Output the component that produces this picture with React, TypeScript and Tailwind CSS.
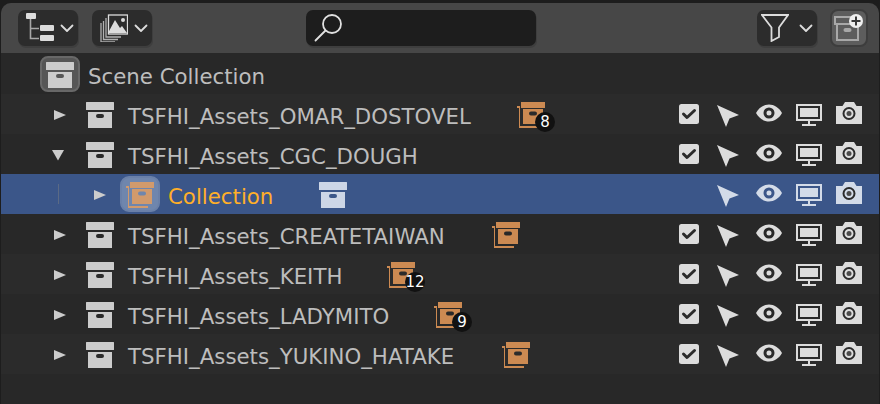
import React from "react";

const font = "font-['DejaVu_Sans','Liberation_Sans',sans-serif]";

const BoxIcon = ({ color = "#cccccc" }: { color?: string }) => (
  <svg width="28" height="26" viewBox="0 0 28 26" className="mt-[2px] shrink-0">
    <path d="M0.5 0H27.5A.5 .5 0 0 1 28 .5V7.5A.5 .5 0 0 1 27.5 8H.5A.5 .5 0 0 1 0 7.5V.5A.5 .5 0 0 1 .5 0Z" fill={color} />
    <path fillRule="evenodd" d="M2 10H26V26H2ZM12 12A2 2 0 0 0 12 16H16A2 2 0 0 0 16 12Z" fill={color} />
  </svg>
);

const OrangeBox = ({ color = "#cc8a52" }: { color?: string }) => (
  <svg width="28" height="26" viewBox="0 0 28 26" className="mt-[2px] shrink-0">
    <rect x="4" y="0" width="24" height="6" fill={color} />
    <path fillRule="evenodd" d="M6 7H26V22H6ZM14 9.5A1.8 1.8 0 0 0 14 13.5H18A1.8 1.8 0 0 0 18 9.5Z" fill={color} />
    <path d="M0 4H3V24H22V26H2V6H0Z" fill={color} />
  </svg>
);

const Triangle = ({ down = false }: { down?: boolean }) => (
  <svg width="12" height="12" viewBox="0 0 12 12" className={down ? "mt-[2px] mr-[2px] shrink-0 -ml-0.5" : "mt-[2px] shrink-0"}>
    {down ? <path d="M0 1H12L6 11.5Z" fill="#cccccc" /> : <path d="M0 1L12 6L0 11Z" fill="#cccccc" />}
  </svg>
);

const Chevron = () => (
  <svg width="14" height="9" viewBox="0 0 14 9" className="shrink-0">
    <path d="M1.5 1.5L7 7L12.5 1.5" fill="none" stroke="#dcdcdc" strokeWidth="1.8" strokeLinecap="round" strokeLinejoin="round" />
  </svg>
);

const Checkbox = () => (
  <svg width="20" height="20" viewBox="0 0 20 20">
    <rect width="20" height="20" rx="2.5" fill="#dcdcdc" />
    <path d="M4.5 10L8 13.5L15.5 6.5" fill="none" stroke="#2b2b2b" strokeWidth="3" strokeLinecap="round" strokeLinejoin="round" />
  </svg>
);

const Cursor = ({ color }: { color: string }) => (
  <svg width="22" height="22" viewBox="0 0 22 22" className="mt-[4px] -ml-[2px]">
    <path d="M0 0L22 10L12.5 13.5L9 22Z" fill={color} />
  </svg>
);

const Eye = ({ color }: { color: string }) => (
  <svg width="26" height="18" viewBox="0 0 26 18">
    <path fillRule="evenodd" d="M0 9C3 3.5 8 0.5 13 0.5S23 3.5 26 9C23 14.5 18 17.5 13 17.5S3 14.5 0 9ZM13 3.5A5.5 5.5 0 1 0 13 14.5A5.5 5.5 0 1 0 13 3.5ZM13 6.5A2.5 2.5 0 1 1 13 11.5A2.5 2.5 0 1 1 13 6.5Z" fill={color} />
  </svg>
);

const Monitor = ({ color }: { color: string }) => (
  <svg width="26" height="22" viewBox="0 0 26 22">
    <path fillRule="evenodd" d="M0 0H26V17H0ZM2 2V15H24V2Z" fill={color} />
    <rect x="4" y="4" width="18" height="9" fill={color} />
    <rect x="12" y="17" width="2" height="3" fill={color} />
    <rect x="6" y="20" width="14" height="2" fill={color} />
  </svg>
);

const Camera = ({ color }: { color: string }) => (
  <svg width="26" height="22" viewBox="0 0 26 22">
    <path d="M0 4H6.5L9 0H18L20.5 4H26V22H0Z" fill={color} />
    <circle cx="13" cy="11.5" r="5.5" fill="none" stroke="#2b2b2b" strokeWidth="2" />
    <circle cx="13" cy="11.5" r="2.5" fill="#4a4a4a" />
  </svg>
);

const Restrict = ({ check = true, color = "#dcdcdc" }: { check?: boolean; color?: string }) => (
  <div className="ml-auto mr-[10px] flex items-center">
    <div className="flex h-10 w-10 items-center justify-center">{check && <Checkbox />}</div>
    <div className="flex h-10 w-10 items-center justify-center"><Cursor color={color} /></div>
    <div className="flex h-10 w-10 items-center justify-center pb-[2px]"><Eye color={color} /></div>
    <div className="flex h-10 w-10 items-center justify-center pt-[2px]"><Monitor color={color} /></div>
    <div className="flex h-10 w-10 items-center justify-center pb-[2px]"><Camera color={color} /></div>
  </div>
);

const rows = [
  { name: "TSFHI_Assets_OMAR_DOSTOVEL", count: "8", bg: "bg-[#2b2b2b]", w: "w-[343px]" },
  { name: "TSFHI_Assets_CGC_DOUGH", open: true, noChild: true, bg: "bg-[#282828]", w: "w-[291px]" },
  { name: "Collection", selected: true, bg: "bg-[#3b5689]", w: "w-[105px]" },
  { name: "TSFHI_Assets_CREATETAIWAN", bg: "bg-[#282828]", w: "w-[318px]" },
  { name: "TSFHI_Assets_KEITH", count: "12", bg: "bg-[#2b2b2b]", w: "w-[213px]" },
  { name: "TSFHI_Assets_LADYMITO", count: "9", bg: "bg-[#282828]", w: "w-[260px]" },
  { name: "TSFHI_Assets_YUKINO_HATAKE", bg: "bg-[#2b2b2b]", w: "w-[328px]" },
];

const HeaderButton = ({ children, className }: { children: React.ReactNode; className: string }) => (
  <div className={`flex h-9 items-center rounded-[7px] bg-[#2c2c2c] shadow-[1px_2px_0_#3e3e3e] ${className}`}>{children}</div>
);

export default function App() {
  return (
    <div className={`h-[404px] w-[880px] overflow-hidden bg-[#1d1d1d] px-[1px] pt-[3px] ${font}`}>
      <div className="flex h-full flex-col overflow-hidden rounded-t-[10px] bg-[#282828]">
        <div className="flex h-[50px] shrink-0 items-center bg-[#474747] pl-[17px] pr-[11px]">
          <HeaderButton className="w-[60px] gap-[5px] pl-2">
            <svg width="30" height="30" viewBox="0 0 30 30" className="shrink-0 -ml-px">
              <rect x="1" y="0" width="10" height="6" rx="1" fill="#dcdcdc" />
              <path d="M5.5 6V25.5H14M5.5 15.5H14" fill="none" stroke="#a8a8a8" strokeWidth="1.6" />
              <rect x="15" y="12" width="14" height="6" rx="1" fill="#dcdcdc" />
              <rect x="15" y="22" width="14" height="6" rx="1" fill="#dcdcdc" />
            </svg>
            <Chevron />
          </HeaderButton>
          <HeaderButton className="ml-[14px] w-[60px] gap-[6px] pl-2">
            <svg width="28" height="28" viewBox="0 0 28 28" className="shrink-0">
              <rect x="8.5" y="1" width="19" height="19" fill="none" stroke="#dcdcdc" strokeWidth="1.3" />
              <path d="M8 19L15 6L20 14L22 12L27 19Z" fill="#dcdcdc" />
              <circle cx="23" cy="6" r="2" fill="#dcdcdc" />
              <path d="M6 4V23H21M3.5 7V25.5H18M1 9V28H15" fill="none" stroke="#b0b0b0" strokeWidth="1.3" />
            </svg>
            <Chevron />
          </HeaderButton>
          <div className="ml-[154px] flex h-9 w-[230px] items-center rounded-[7px] bg-[#1d1d1d] pl-2 shadow-[1px_2px_0_#3e3e3e]">
            <svg width="28" height="28" viewBox="0 0 28 28">
              <circle cx="18" cy="10" r="9" fill="none" stroke="#e0e0e0" strokeWidth="1.8" />
              <path d="M11.5 16.5L1.5 26.5" stroke="#e0e0e0" strokeWidth="1.8" strokeLinecap="round" />
            </svg>
          </div>
          <HeaderButton className="ml-[221px] w-[60px] gap-[10px] pl-1">
            <svg width="28" height="28" viewBox="0 0 28 28" className="shrink-0">
              <path d="M1 1H27L18 13.5V23L10.5 27V13.5Z" fill="none" stroke="#dcdcdc" strokeWidth="1.8" strokeLinejoin="miter" />
            </svg>
            <Chevron />
          </HeaderButton>
          <div className="ml-[13px] flex h-[38px] w-[38px] items-center justify-center rounded-[8px] border-2 border-[#3d3d3d] bg-[#5d5d5d]">
            <svg width="30" height="30" viewBox="0 0 30 30" className="shrink-0">
              <path d="M1 4H20V11H1ZM3 11V27H24V13" fill="none" stroke="#a8a8a8" strokeWidth="2" />
              <rect x="9.5" y="15" width="8" height="4" rx="2" fill="#a8a8a8" />
              <circle cx="22" cy="8" r="7" fill="#f0f0f0" />
              <path d="M22 3.5V12.5M17.5 8H26.5" stroke="#3a3a3a" strokeWidth="2" />
            </svg>
          </div>
        </div>

        <div className="flex h-[41px] shrink-0 items-center bg-[#282828] pl-[39px] pt-px text-[21.3px] text-[#bdbdbd]">
          <div className="flex h-9 w-10 shrink-0 items-center justify-center rounded-[8px] border-2 border-[#686868] bg-[#565656]">
            <BoxIcon />
          </div>
          <span className="ml-2 mt-[5px] leading-none">Scene Collection</span>
        </div>

        {rows.map((row) => (
          <div key={row.name} className={`flex h-10 shrink-0 items-center ${row.bg}`}>
            {row.selected ? (
              <>
                <div className="ml-[57px] h-5 w-px bg-[#5b6a85]" />
                <div className="ml-[35px] flex"><Triangle /></div>
                <div className="ml-[14px] flex h-9 w-10 shrink-0 items-center justify-center rounded-[9px] border-2 border-[#6a80a8] bg-[#6f86ad]">
                  <OrangeBox color="#d19a6c" />
                </div>
              </>
            ) : (
              <>
                <div className="ml-[53px] flex"><Triangle down={row.open} /></div>
                <div className="ml-5 flex"><BoxIcon /></div>
              </>
            )}
            <span className={`mt-[5px] whitespace-nowrap text-[21.3px] leading-none ${row.w} ${row.selected ? "ml-2 text-[#ffaf29]" : "ml-[14px] text-[#bdbdbd]"}`}>
              {row.name}
            </span>
            {row.selected ? (
              <div className="ml-[46px] flex"><BoxIcon color="#cdd6e6" /></div>
            ) : !row.noChild ? (
              <div className="relative ml-[46px] flex">
                <OrangeBox />
                {row.count && (
                  <span className="absolute left-[18px] top-[12px] flex h-5 w-5 items-center justify-center rounded-full bg-[#111111] text-[15px] leading-none text-white">
                    {row.count}
                  </span>
                )}
              </div>
            ) : null}
            <Restrict check={!row.selected} color={row.selected ? "#d3dbe8" : "#dcdcdc"} />
          </div>
        ))}
      </div>
    </div>
  );
}
